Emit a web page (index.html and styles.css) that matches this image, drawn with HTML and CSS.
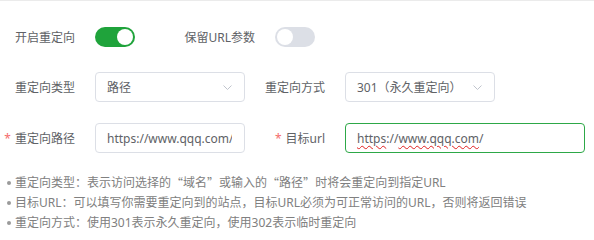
FILE: index.html
```html
<!DOCTYPE html>
<html lang="zh">
<head>
<meta charset="utf-8">
<link rel="stylesheet" href="styles.css">
</head>
<body>
<div class="page">
  <div class="row row-switch">
    <span class="label">开启重定向</span>
    <span class="switch on"><span class="knob"></span></span>
    <span class="label label-wide">保留URL参数</span>
    <span class="switch off"><span class="knob"></span></span>
  </div>
  <div class="row">
    <span class="label">重定向类型</span>
    <div class="select"><span class="val">路径</span><svg class="chev" width="9" height="5" viewBox="0 0 9 5"><path d="M0.5 0.5 L4.5 4.5 L8.5 0.5" fill="none" stroke="#c0c4cc" stroke-width="1"/></svg></div>
    <span class="label label-second">重定向方式</span>
    <div class="select"><span class="val">301（永久重定向）</span><svg class="chev" width="9" height="5" viewBox="0 0 9 5"><path d="M0.5 0.5 L4.5 4.5 L8.5 0.5" fill="none" stroke="#c0c4cc" stroke-width="1"/></svg></div>
  </div>
  <div class="row row-input">
    <span class="label"><span class="req">重定向路径</span></span>
    <div class="input"><span class="val clip">https://www.qqq.com/</span></div>
    <span class="label label-second"><span class="req">目标url</span></span>
    <div class="input wide focus"><span class="val"><span class="spell">https</span>://<span class="spell">www.qqq.com</span>/</span></div>
  </div>
  <ul class="notes">
    <li>重定向类型：表示访问选择的<span class="q">“</span>域名<span class="q">”</span>或输入的<span class="q">“</span>路径<span class="q">”</span>时将会重定向到指定URL</li>
    <li>目标URL：可以填写你需要重定向到的站点，目标URL必须为可正常访问的URL，否则将返回错误</li>
    <li>重定向方式：使用301表示永久重定向，使用302表示临时重定向</li>
  </ul>
</div>
</body>
</html>
```
FILE: styles.css
```css
html, body {
  margin: 0;
  padding: 0;
  background: #fff;
  overflow: hidden;
}
body {
  font-family: "Noto Sans", "Noto Sans CJK SC", sans-serif;
  font-size: 12px;
  color: #606266;
}
.page {
  border-top: 1px solid #ebebeb;
  padding: 21px 0 0 15px;
}
.row {
  display: flex;
  align-items: center;
  height: 30px;
}
.row + .row {
  margin-top: 20px;
}
.row-input {
  margin-top: 21px !important;
}
.label {
  box-sizing: border-box;
  width: 80px;
  padding-right: 20px;
  display: flex;
  justify-content: flex-end;
  align-items: center;
  flex: none;
  white-space: nowrap;
  color: #606266;
}
.label-wide {
  width: 100px;
  margin-left: 40px;
}
.label-second {
  margin-left: 20px;
}
.req {
  flex: none;
}
.req::before {
  content: "*";
  color: #f56c6c;
  margin-right: 4px;
}
.switch {
  width: 40px;
  height: 20px;
  border-radius: 10px;
  display: flex;
  align-items: center;
  padding: 0 2px;
  box-sizing: border-box;
  flex: none;
}
.switch.on {
  background: #1fa33b;
  justify-content: flex-end;
}
.switch.off {
  background: #dcdfe6;
  justify-content: flex-start;
}
.knob {
  width: 16px;
  height: 16px;
  border-radius: 50%;
  background: #fff;
}
.select, .input {
  box-sizing: border-box;
  width: 150px;
  height: 30px;
  border: 1px solid #dcdfe6;
  border-radius: 4px;
  display: flex;
  align-items: center;
  padding: 0 12px 0 11px;
  flex: none;
  overflow: hidden;
}
.select {
  justify-content: space-between;
}
.select .val, .input .val {
  color: #606266;
  white-space: nowrap;
}
.chev {
  flex: none;
}
.input .clip {
  overflow: hidden;
}
.input.wide {
  width: 240px;
}
.input.focus {
  border-color: #2da847;
}
.spell {
  text-decoration: underline wavy #e02020;
  text-decoration-thickness: 1px;
  text-underline-offset: 2px;
}
.notes {
  list-style: none;
  margin: 20px 0 0 -15px;
  padding: 0;
  color: #808080;
  line-height: 20px;
}
.notes li {
  display: flex;
  align-items: center;
  white-space: nowrap;
}
.notes li::before {
  content: "";
  width: 4px;
  height: 4px;
  border-radius: 50%;
  background: #9a9a9a;
  margin: 0 4px 0 7px;
  flex: none;
}
.q {
  font-family: "Noto Sans CJK SC", sans-serif;
}
```
